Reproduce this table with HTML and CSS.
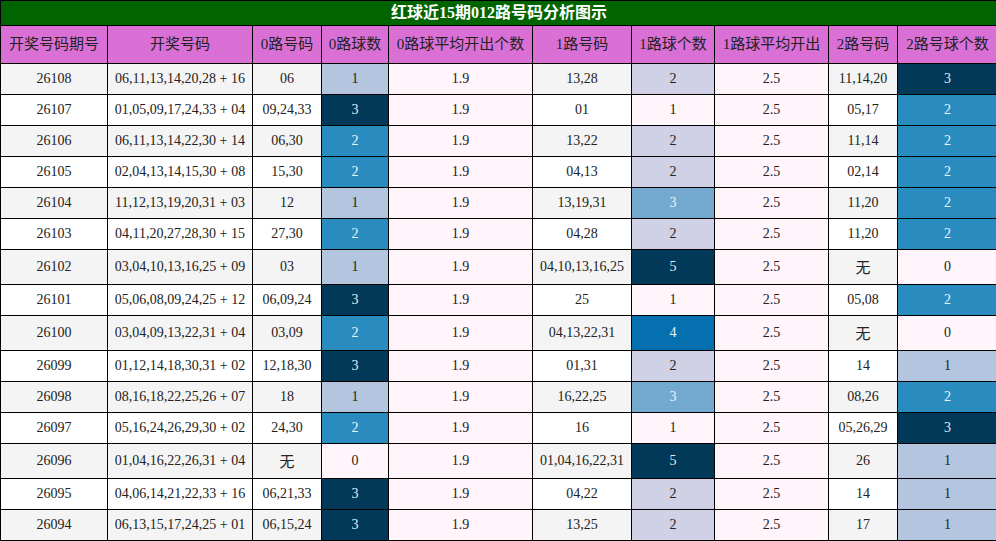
FILE: index.html
```html
<!DOCTYPE html>
<html lang="zh">
<head>
<meta charset="utf-8">
<title>红球近15期012路号码分析图示</title>
<link rel="stylesheet" href="styles.css">
</head>
<body>
<table class="chart">
  <colgroup>
    <col class="w1"><col class="w2"><col class="w3"><col class="w4"><col class="w5">
    <col class="w6"><col class="w7"><col class="w8"><col class="w9"><col class="w10">
  </colgroup>
  <thead>
    <tr><th class="title" colspan="10">红球近15期012路号码分析图示</th></tr>
    <tr class="head">
      <th>开奖号码期号</th><th>开奖号码</th><th>0路号码</th><th>0路球数</th><th>0路球平均开出个数</th>
      <th>1路号码</th><th>1路球个数</th><th>1路球平均开出</th><th>2路号码</th><th>2路号球个数</th>
    </tr>
  </thead>
  <tbody>
    <tr class="odd"><td class="g">26108</td><td class="g">06,11,13,14,20,28 + 16</td><td class="g">06</td><td class="c1">1</td><td class="p">1.9</td><td class="g">13,28</td><td class="d2">2</td><td class="p">2.5</td><td class="g">11,14,20</td><td class="c3">3</td></tr>
    <tr><td class="g">26107</td><td class="g">01,05,09,17,24,33 + 04</td><td class="g">09,24,33</td><td class="c3">3</td><td class="p">1.9</td><td class="g">01</td><td class="d1">1</td><td class="p">2.5</td><td class="g">05,17</td><td class="c2">2</td></tr>
    <tr class="odd"><td class="g">26106</td><td class="g">06,11,13,14,22,30 + 14</td><td class="g">06,30</td><td class="c2">2</td><td class="p">1.9</td><td class="g">13,22</td><td class="d2">2</td><td class="p">2.5</td><td class="g">11,14</td><td class="c2">2</td></tr>
    <tr><td class="g">26105</td><td class="g">02,04,13,14,15,30 + 08</td><td class="g">15,30</td><td class="c2">2</td><td class="p">1.9</td><td class="g">04,13</td><td class="d2">2</td><td class="p">2.5</td><td class="g">02,14</td><td class="c2">2</td></tr>
    <tr class="odd"><td class="g">26104</td><td class="g">11,12,13,19,20,31 + 03</td><td class="g">12</td><td class="c1">1</td><td class="p">1.9</td><td class="g">13,19,31</td><td class="d3">3</td><td class="p">2.5</td><td class="g">11,20</td><td class="c2">2</td></tr>
    <tr><td class="g">26103</td><td class="g">04,11,20,27,28,30 + 15</td><td class="g">27,30</td><td class="c2">2</td><td class="p">1.9</td><td class="g">04,28</td><td class="d2">2</td><td class="p">2.5</td><td class="g">11,20</td><td class="c2">2</td></tr>
    <tr class="odd tall"><td class="g">26102</td><td class="g">03,04,10,13,16,25 + 09</td><td class="g">03</td><td class="c1">1</td><td class="p">1.9</td><td class="g">04,10,13,16,25</td><td class="d5">5</td><td class="p">2.5</td><td class="g cjk">无</td><td class="c0">0</td></tr>
    <tr><td class="g">26101</td><td class="g">05,06,08,09,24,25 + 12</td><td class="g">06,09,24</td><td class="c3">3</td><td class="p">1.9</td><td class="g">25</td><td class="d1">1</td><td class="p">2.5</td><td class="g">05,08</td><td class="c2">2</td></tr>
    <tr class="odd tall"><td class="g">26100</td><td class="g">03,04,09,13,22,31 + 04</td><td class="g">03,09</td><td class="c2">2</td><td class="p">1.9</td><td class="g">04,13,22,31</td><td class="d4">4</td><td class="p">2.5</td><td class="g cjk">无</td><td class="c0">0</td></tr>
    <tr><td class="g">26099</td><td class="g">01,12,14,18,30,31 + 02</td><td class="g">12,18,30</td><td class="c3">3</td><td class="p">1.9</td><td class="g">01,31</td><td class="d2">2</td><td class="p">2.5</td><td class="g">14</td><td class="c1">1</td></tr>
    <tr class="odd"><td class="g">26098</td><td class="g">08,16,18,22,25,26 + 07</td><td class="g">18</td><td class="c1">1</td><td class="p">1.9</td><td class="g">16,22,25</td><td class="d3">3</td><td class="p">2.5</td><td class="g">08,26</td><td class="c2">2</td></tr>
    <tr><td class="g">26097</td><td class="g">05,16,24,26,29,30 + 02</td><td class="g">24,30</td><td class="c2">2</td><td class="p">1.9</td><td class="g">16</td><td class="d1">1</td><td class="p">2.5</td><td class="g">05,26,29</td><td class="c3">3</td></tr>
    <tr class="odd tall"><td class="g">26096</td><td class="g">01,04,16,22,26,31 + 04</td><td class="g cjk">无</td><td class="c0">0</td><td class="p">1.9</td><td class="g">01,04,16,22,31</td><td class="d5">5</td><td class="p">2.5</td><td class="g">26</td><td class="c1">1</td></tr>
    <tr><td class="g">26095</td><td class="g">04,06,14,21,22,33 + 16</td><td class="g">06,21,33</td><td class="c3">3</td><td class="p">1.9</td><td class="g">04,22</td><td class="d2">2</td><td class="p">2.5</td><td class="g">14</td><td class="c1">1</td></tr>
    <tr class="odd"><td class="g">26094</td><td class="g">06,13,15,17,24,25 + 01</td><td class="g">06,15,24</td><td class="c3">3</td><td class="p">1.9</td><td class="g">13,25</td><td class="d2">2</td><td class="p">2.5</td><td class="g">17</td><td class="c1">1</td></tr>
  </tbody>
</table>
</body>
</html>
```
FILE: styles.css
```css
html, body {
  margin: 0;
  padding: 0;
  background: #ffffff;
}

.chart {
  border-collapse: collapse;
  table-layout: fixed;
  width: 997px;
  font-family: "Liberation Serif", "Noto Sans CJK SC", serif;
  font-size: 14px;
  color: #222;
}

.w1 { width: 107px; }
.w2 { width: 145px; }
.w3 { width: 69px; }
.w4 { width: 67px; }
.w5 { width: 144px; }
.w6 { width: 99px; }
.w7 { width: 83px; }
.w8 { width: 114px; }
.w9 { width: 69px; }
.w10 { width: 100px; }

.chart th,
.chart td {
  border: 1px solid #000;
  text-align: center;
  white-space: nowrap;
  overflow: hidden;
}

.title {
  background: #006400;
  color: #ffffff;
  font-size: 16px;
  font-weight: bold;
  line-height: 24px;
  padding: 0;
  text-align: center;
}

.head th {
  background: #da70d6;
  color: #222;
  font-weight: normal;
  font-size: 15px;
  line-height: 21px;
  padding: 8px 0;
}

.chart td {
  line-height: 16px;
  padding: 7px 0;
}

.chart tr.tall td {
  padding: 9px 0;
}

.cjk {
  font-family: "Noto Sans CJK SC", sans-serif;
  font-size: 15px;
}

.g { background: #ffffff; }
.odd .g { background: #f4f4f4; }
.p { background: #fff5fa; }

.c0 { background: #fff5fa; }
.c1 { background: #b3c5df; }
.c2 { background: #2a8bbe; color: #eef3f8; }
.c3 { background: #023858; color: #e6edf2; }

.d1 { background: #fff5fa; }
.d2 { background: #d0d1e6; }
.d3 { background: #74a9cf; color: #eef3f8; }
.d4 { background: #0570b0; color: #eef3f8; }
.d5 { background: #023858; color: #e6edf2; }
```
